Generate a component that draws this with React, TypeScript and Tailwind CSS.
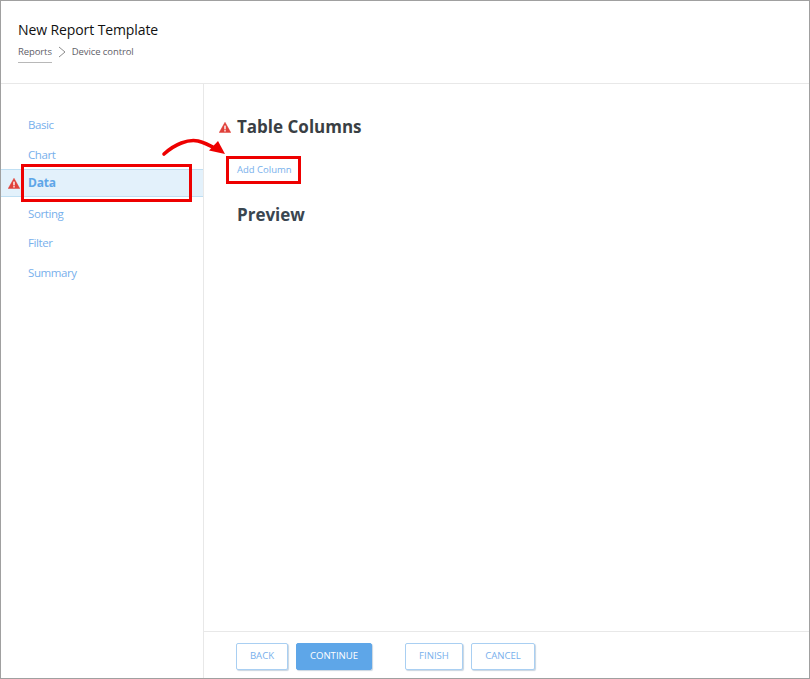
import React from "react";

const font = { fontFamily: '"Open Sans", "Noto Sans", sans-serif' };

function Warn({ className }: { className: string }) {
  return (
    <svg viewBox="0 0 12 11" className={className}>
      <path d="M6 0.3 L11.8 10.6 H0.2 Z" fill="#e0403a" stroke="#e0403a" strokeWidth="0.5" strokeLinejoin="round" />
      <rect x="5.3" y="3.6" width="1.4" height="3.8" fill="#fff" />
      <rect x="5.3" y="8.1" width="1.4" height="1.4" fill="#fff" />
    </svg>
  );
}

function Nav({ label, active }: { label: string; active?: boolean }) {
  return (
    <div
      className={
        active
          ? "relative mb-[1.5px] flex h-[28px] items-center border-y border-[#bfdff3] bg-[#e3f1fb] pl-[27px] text-[12px] font-bold tracking-[-0.2px] text-[#5ea6e8]"
          : "flex h-[29.5px] items-center pl-[27px] text-[11.5px] tracking-[-0.4px] text-[#78b0ec]"
      }
    >
      {active && <Warn className="absolute left-[7px] top-[8px] h-[11px] w-[12px]" />}
      {label}
    </div>
  );
}

function Btn({ label, w, primary }: { label: string; w: string; primary?: boolean }) {
  return (
    <button
      className={
        (primary
          ? "border-[#5ea6e8] bg-[#5ea6e8] text-white "
          : "border-[#a9cff2] bg-white text-[#78b0ec] ") +
        w +
        " h-[27px] rounded-[2px] border text-[9.6px] shadow-[1px_1px_1px_rgba(120,150,180,0.4)]"
      }
    >
      {label}
    </button>
  );
}

export default function App() {
  return (
    <div className="relative flex h-[679px] w-[810px] flex-col border border-[#a0a0a0] bg-white" style={font}>
      <header className="h-[83px] shrink-0 border-b border-[#e8e8e8] pl-[17px] pt-[19px]">
        <div className="text-[14px] leading-[20px] tracking-[-0.1px] text-[#111]">New Report Template</div>
        <div className="mt-[3px] flex items-start text-[9.5px] leading-[18px] tracking-[-0.1px] text-[#5f6068]">
          <span className="h-[20px] border-b border-[#b8b8b8]">Reports</span>
          <svg viewBox="0 0 8 12" className="ml-[6px] mr-[6px] mt-[3px] h-[12px] w-[8px]" fill="none" stroke="#808080" strokeWidth="0.9">
            <path d="M1 1 L7 6 L1 11" />
          </svg>
          <span>Device control</span>
        </div>
      </header>

      <div className="flex min-h-0 flex-1">
        <aside className="w-[203px] shrink-0 border-r border-[#e8e8e8] pt-[26px]">
          <Nav label="Basic" />
          <Nav label="Chart" />
          <Nav label="Data" active />
          <Nav label="Sorting" />
          <Nav label="Filter" />
          <Nav label="Summary" />
        </aside>

        <div className="flex min-w-0 flex-1 flex-col">
          <main className="flex-1 pl-[33px] pt-[31px]">
            <div className="relative text-[17px] font-bold leading-[24px] text-[#3a3f44]">
              <Warn className="absolute left-[-18px] top-[7px] h-[11px] w-[12px]" />
              Table Columns
            </div>
            <div className="mt-[24px] text-[9.5px] leading-[14px] text-[#78b0ec]">Add Column</div>
            <div className="mt-[26px] text-[17px] font-bold leading-[24px] text-[#3a4650]">Preview</div>
          </main>
          <footer className="flex h-[47px] shrink-0 items-start gap-[8px] border-t border-[#e8e8e8] pl-[32px] pt-[11px]">
            <Btn label="BACK" w="w-[52px]" />
            <Btn label="CONTINUE" w="w-[76px]" primary />
            <div className="w-[17px]" />
            <Btn label="FINISH" w="w-[58px]" />
            <Btn label="CANCEL" w="w-[64px]" />
          </footer>
        </div>
      </div>

      {/* Annotations lying over the page */}
      <div className="absolute left-[20px] top-[163px] h-[38px] w-[171px] border-[3px] border-[#ee0000]" />
      <div className="absolute left-[225px] top-[155px] h-[28px] w-[75px] border-[3px] border-[#ee0000]" />
      <svg className="absolute left-[159px] top-[134px] h-[24px] w-[70px]" viewBox="0 0 70 24" fill="none">
        <path d="M4 19 C15 9 28 4 38 6 C46 8 51 11 56 14" stroke="#ee0000" strokeWidth="3.6" strokeLinecap="round" />
        <path d="M65 19 L49 15.5 L58 6 Z" fill="#ee0000" />
      </svg>
    </div>
  );
}
